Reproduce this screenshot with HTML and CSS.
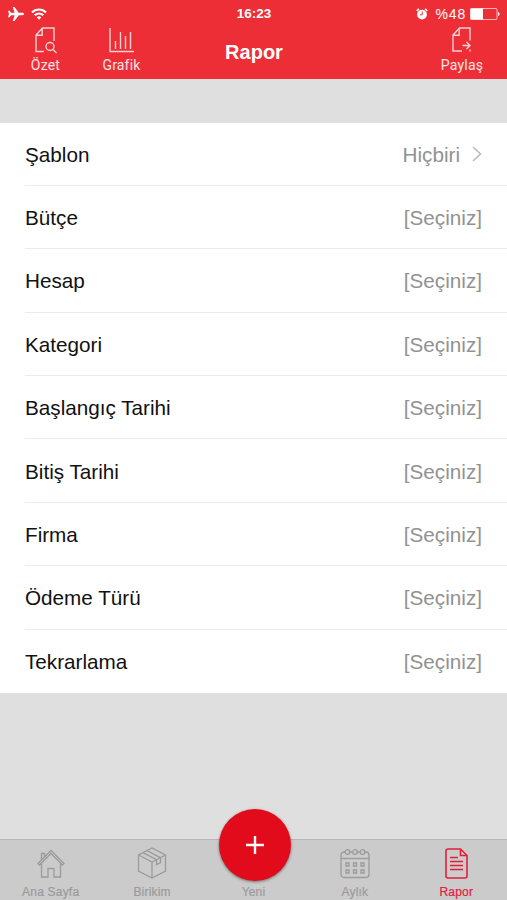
FILE: index.html
```html
<!doctype html>
<html lang="tr">
<head>
	<meta charset="UTF-8">
	<title>Rapor</title>
	<link rel="stylesheet" href="styles.css">
</head>
<body>
<div class="app">
	<div class="header">
		<div class="status">
			<div class="status-left">
				<svg class="plane" width="16" height="14" viewBox="0 0 16 14"><path fill="#fff" d="M16 7c0-.8-.8-1.200-1.800-1.200H10.800L6.500 0H4.800l1.800 5.800H3.200L1.500 3.800H0L1 7l-1 3.200h1.500l1.700-2h3.400L4.800 14h1.700l4.300-5.800h3.400c1 0 1.800-.4 1.800-1.200z"/></svg>
				<svg class="wifi" width="16" height="12" viewBox="0 0 16 12" fill="none" stroke="#fff" stroke-width="2"><path d="M1 4.500c4-4 10-4 14 0M3.700 7.300c2.500-2.500 6.100-2.500 8.600 0"/><path fill="#fff" stroke="none" d="M5.700 9.200c1.400-1.200 3.200-1.200 4.600 0L8 11.700z"/></svg>
			</div>
			<div class="time">16:23</div>
			<div class="status-right">
				<svg class="alarm" width="12" height="12" viewBox="0 0 12 12"><circle cx="6" cy="6.600" r="4.900" fill="#fff"/><path d="M.7 2.800 3 .9M11.300 2.800 9 .9" stroke="#fff" stroke-width="1.600"/><path d="M6.300 3.500v3.300H4" fill="none" stroke="#ee2e36"/></svg>
				<span class="percent">%48</span>
				<svg class="battery" width="30" height="12" viewBox="0 0 30 12"><rect x=".5" y=".5" width="26.500" height="11" rx="1" fill="none" stroke="#fff" stroke-opacity=".65"/><path fill="#fff" d="M.5.5H13v11H.5zM28 4c2 .5 2 3.500 0 4z"/></svg>
			</div>
		</div>
		<div class="nav">
			<a class="nav-btn ozet">
				<svg width="22" height="27" viewBox="0 0 22 27"><path d="M9 24.500H1V8l6.500-7H19v13M1.500 8.300h5.700V1.500"/><circle cx="15" cy="19.500" r="4"/><path d="m18 22.500 3.500 3.500"/></svg>
				<span>Özet</span>
			</a>
			<a class="nav-btn grafik">
				<svg width="25" height="27" viewBox="0 0 25 27"><path d="M1 1v23.500h24"/><path d="M6.500 14v8M11.500 5v17M16.500 9v13M21.500 5v17"/></svg>
				<span>Grafik</span>
			</a>
			<h1>Rapor</h1>
			<a class="nav-btn paylas">
				<svg width="20" height="27" viewBox="0 0 20 27"><path d="M10 24H1V8l6.500-7H18v12.500M1.500 8.300h5.700V1.500M18 22.500v2M10.500 18.500H18m-3.500-3.500 3.500 3.500-3.500 3.500"/></svg>
				<span>Paylaş</span>
			</a>
		</div>
	</div>
	<ul class="list">
		<li><span>Şablon</span><em>Hiçbiri<svg width="10" height="16" viewBox="0 0 10 16"><path d="m1 1 7.500 7L1 15"/></svg></em></li>
		<li><span>Bütçe</span><em>[Seçiniz]</em></li>
		<li><span>Hesap</span><em>[Seçiniz]</em></li>
		<li><span>Kategori</span><em>[Seçiniz]</em></li>
		<li><span>Başlangıç Tarihi</span><em>[Seçiniz]</em></li>
		<li><span>Bitiş Tarihi</span><em>[Seçiniz]</em></li>
		<li><span>Firma</span><em>[Seçiniz]</em></li>
		<li><span>Ödeme Türü</span><em>[Seçiniz]</em></li>
		<li><span>Tekrarlama</span><em>[Seçiniz]</em></li>
	</ul>
	<div class="tabs">
		<a class="tab">
			<svg width="28" height="30" viewBox="0 0 28 30"><path d="m1 14.500 13-13 13 13-1.500 1.500L14 4.500 2.500 16zM4.500 14.500V28H11v-8.500h6V28h6.500V14.500M4.500 10.500V4.500h3v3.300"/></svg>
			<span>Ana Sayfa</span>
		</a>
		<a class="tab">
			<svg width="30" height="32" viewBox="0 0 30 32"><path d="M15 1 1.500 8v16L15 31l13.500-7V8zM1.500 8 15 15l13.500-7M15 15v16M6 5.700l13.500 7v5l4-2.100v-5L10 3.600"/></svg>
			<span>Birikim</span>
		</a>
		<a class="tab">
			<span>Yeni</span>
		</a>
		<a class="tab">
			<svg width="30" height="31" viewBox="0 0 30 31"><rect x="1" y="4" width="28" height="25.500" rx="3"/><path d="M1 10.500h28"/><g class="ring"><circle cx="7.500" cy="4" r="2.300"/><circle cx="15" cy="4" r="2.300"/><circle cx="22.500" cy="4" r="2.300"/></g><path d="M6 15h3v3H6zM13.500 15h3v3h-3zM21 15h3v3h-3zM6 22h3v3H6zM13.500 22h3v3h-3zM21 22h3v3h-3z"/></svg>
			<span>Aylık</span>
		</a>
		<a class="tab active">
			<svg width="23" height="31" viewBox="0 0 23 31"><path d="M15.500 1H3a2 2 0 0 0-2 2v25a2 2 0 0 0 2 2h17a2 2 0 0 0 2-2V7.500zv6.500H22"/><path d="M5 9.500h8M5 13.500h13M5 17.500h13M5 21.500h13"/></svg>
			<span>Rapor</span>
		</a>
		<div class="add"><svg width="20" height="20" viewBox="0 0 20 20"><path d="M10 1v18M1 10h18"/></svg></div>
	</div>
</div>
</body>
</html>
```
FILE: styles.css
```css
*{ margin:0; padding:0; box-sizing:border-box; }
ul,li{ list-style-type:none; }
em{ font-style:normal; }
svg{ display:block; flex:none; }
body{
	background-color:#dfdfdf;
	font-family:"Liberation Sans", Arial, sans-serif;
	overflow:hidden;
}
.app{
	display:flex;
	flex-direction:column;
	height:900px;
}
.header{
	height:79px;
	background-color:#ee2e36;
	color:#fff;
}
.status{
	display:grid;
	grid-template-columns:1fr 1fr 1fr;
	align-items:center;
	height:27px;
	padding:0 7px 0 8px;
}
.status-left,.status-right{
	display:flex;
	align-items:center;
}
.status-left{ gap:7px; }
.status-right{ justify-content:flex-end; }
.time{
	font-size:13.500px;
	font-weight:bold;
	text-align:center;
}
.percent{
	margin:0 4px 0 8px;
	font-size:14px;
	letter-spacing:.8px;
}
.nav{
	display:grid;
	grid-template-columns:91px 61px 204px 61px 90px;
	height:52px;
}
.nav-btn{
	display:flex;
	flex-direction:column;
	align-items:center;
	font-family:Roboto, sans-serif;
	font-size:14px;
	line-height:16px;
	letter-spacing:.2px;
}
.nav-btn span{
	margin-top:3px;
	opacity:.88;
}
.nav-btn svg{
	fill:none;
	stroke:#fff;
	stroke-width:1.400;
	opacity:.78;
}
.paylas{ grid-column:5; }
.nav h1{
	font-size:20px;
	line-height:51px;
	text-align:center;
}
.list{
	margin-top:43.500px;
	padding-left:25px;
	background-color:#fff;
}
.list li{
	display:flex;
	align-items:center;
	justify-content:space-between;
	height:63.400px;
	padding:2px 25px 0 0;
	border-bottom:1px solid #ebebeb;
	color:#111;
	font-size:20.700px;
}
.list li:last-child{ border-bottom:none; }
.list em{
	display:flex;
	align-items:center;
	color:#929292;
}
.list em svg{
	margin:-2px 0 0 12px;
	fill:none;
	stroke:#bbb;
	stroke-width:1.600;
}
.tabs{
	position:relative;
	display:grid;
	grid-template-columns:repeat(5, 1fr);
	height:61px;
	margin-top:auto;
	background-color:#cbcbcb;
	border-top:1px solid #b7b7b7;
}
.tab{
	display:flex;
	flex-direction:column;
	align-items:center;
	justify-content:flex-end;
	color:#9b9b9b;
	font-size:12px;
	line-height:14px;
	letter-spacing:.2px;
	padding-bottom:1px;
	-webkit-text-stroke:.2px;
}
.tab svg{
	margin-bottom:6px;
	fill:none;
	stroke:#9b9b9b;
	stroke-width:1.300;
}
.tab .ring{ fill:#cbcbcb; }
.active{ color:#e3203b; }
.active svg{
	stroke:#e3203b;
	stroke-width:1.600;
}
/* 中间的添加按钮，盖在标签栏上 */
.add{
	position:absolute;
	top:-31px;
	left:219px;
	display:flex;
	align-items:center;
	justify-content:center;
	width:72px;
	height:72px;
	border-radius:50%;
	background-color:#e10b1b;
	box-shadow:0 1px 3px rgba(0,0,0,.45);
}
.add svg{
	stroke:#fff;
	stroke-width:2.400;
}
```
